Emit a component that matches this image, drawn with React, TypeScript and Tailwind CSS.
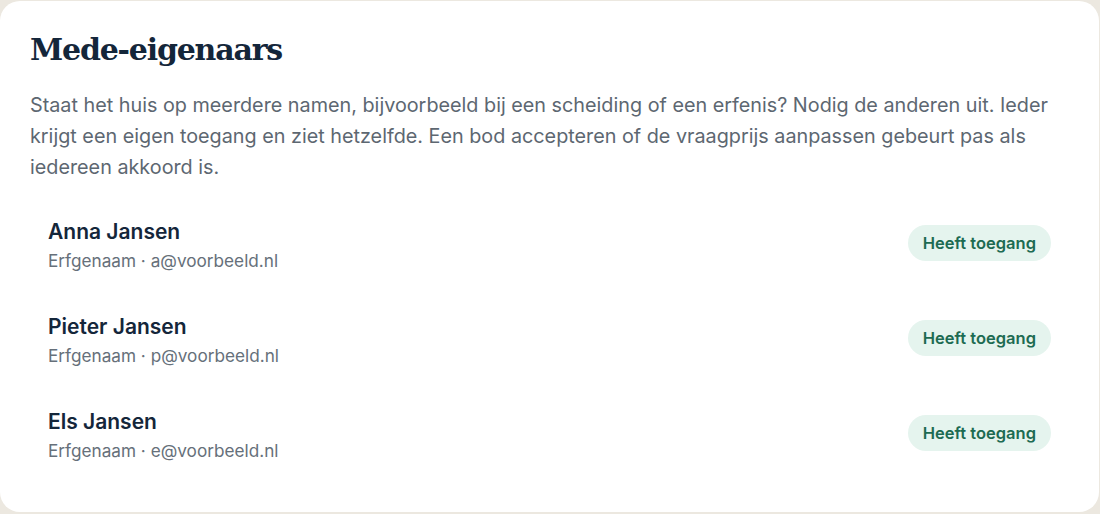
const owners = [
  { name: 'Anna Jansen', role: 'Erfgenaam', email: 'a@voorbeeld.nl' },
  { name: 'Pieter Jansen', role: 'Erfgenaam', email: 'p@voorbeeld.nl' },
  { name: 'Els Jansen', role: 'Erfgenaam', email: 'e@voorbeeld.nl' },
];

export default function App() {
  return (
    <div className="min-h-[514px] bg-[#ece8e0] pt-px pr-px font-['Inter','Liberation_Sans',sans-serif]">
      <div className="h-[511px] rounded-[20px] bg-white px-[30px] pt-[29px]">
        <h2 className="font-['DejaVu_Serif','Liberation_Serif',serif] text-[30px] leading-[40px] font-bold tracking-[-1.2px] text-[#14263a]">
          Mede-eigenaars
        </h2>
        <p className="mt-[20px] text-[19.8px] leading-[31px] text-[#5d6771]">
          Staat het huis op meerdere namen, bijvoorbeeld bij een scheiding of een erfenis? Nodig de anderen uit. Ieder
          krijgt een eigen toegang en ziet hetzelfde. Een bod accepteren of de vraagprijs aanpassen gebeurt pas als
          iedereen akkoord is.
        </p>
        <ul className="mt-[15px]">
          {owners.map((o) => (
            <li key={o.email} className="flex items-center justify-between px-[18px] py-[20px]">
              <div>
                <div className="text-[21px] leading-[28px] font-semibold text-[#14263a]">{o.name}</div>
                <div className="mt-[3px] text-[17.2px] leading-[24px] text-[#66707a]">
                  {o.role} · {o.email}
                </div>
              </div>
              <span className="-mt-[6px] rounded-full bg-[#e5f4ee] px-[15px] py-[6px] text-[16.5px] leading-[24px] font-semibold text-[#1d6b52]">
                Heeft toegang
              </span>
            </li>
          ))}
        </ul>
      </div>
    </div>
  );
}
